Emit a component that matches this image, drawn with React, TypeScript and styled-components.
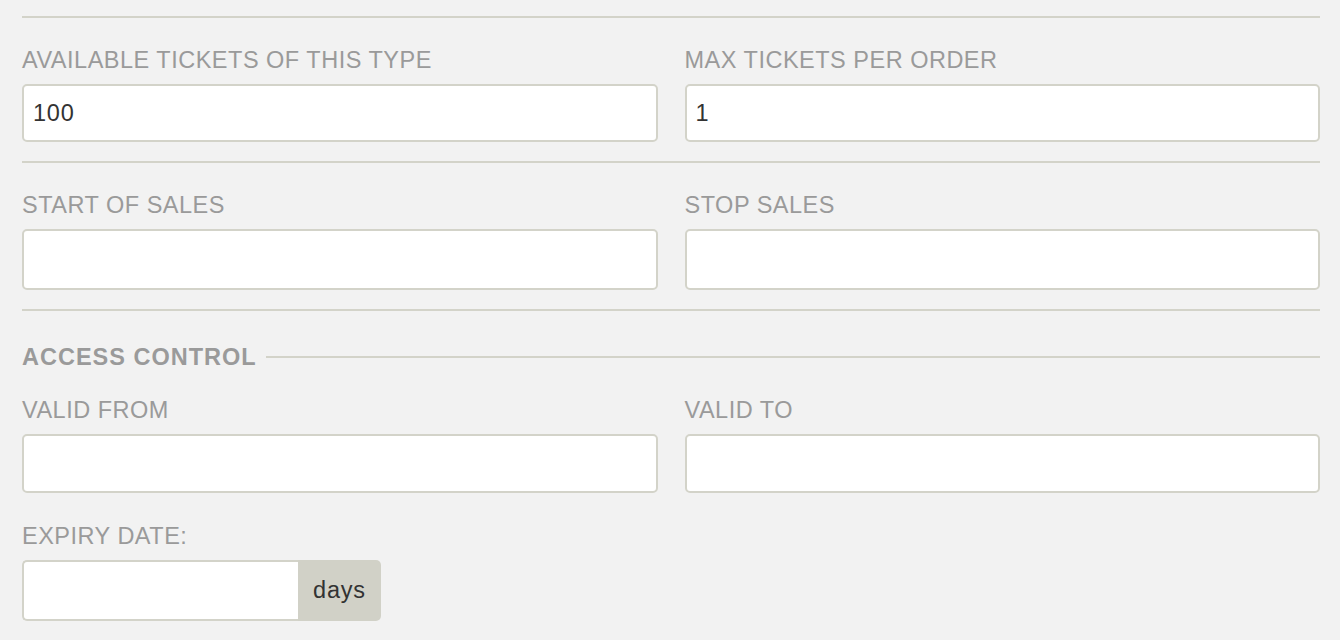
import React from "react";
import styled, { createGlobalStyle } from "styled-components";

const GlobalStyle = createGlobalStyle`
  html, body {
    margin: 0;
    padding: 0;
    background: #f2f2f2;
    font-family: "Liberation Sans", Arial, Helvetica, sans-serif;
  }
`;

const Page = styled.div`
  padding: 16px 20px 0 22px;
  width: 1340px;
  box-sizing: border-box;
`;

const Divider = styled.hr<{ top?: number }>`
  border: none;
  height: 2px;
  margin: ${({ top }) => top ?? 0}px 0 0 0;
  background: #d3d3c9;
`;

const Row = styled.div<{ top: number }>`
  display: grid;
  grid-template-columns: 1fr 1fr;
  column-gap: 27px;
  margin-top: ${({ top }) => top}px;
`;

const Field = styled.div<{ top?: number }>`
  display: flex;
  flex-direction: column;
  margin-top: ${({ top }) => top ?? 0}px;
`;

const Label = styled.label`
  font-size: 23.5px;
  letter-spacing: 0.5px;
  line-height: 26px;
  color: #9a9a9a;
  text-transform: uppercase;
  margin-bottom: 11px;
`;

const TextInput = styled.input<{ h: number }>`
  box-sizing: border-box;
  width: 100%;
  height: ${({ h }) => h}px;
  border: 2px solid #d3d3c9;
  border-radius: 5px;
  background: #ffffff;
  padding: 0 9px;
  font-family: inherit;
  font-size: 23.5px;
  letter-spacing: 0.8px;
  color: #333333;
  outline: none;
`;

const SectionHeader = styled.div`
  display: flex;
  align-items: center;
  gap: 9px;
  margin-top: 33px;
  font-size: 23.5px;
  letter-spacing: 1px;
  line-height: 26px;
  font-weight: bold;
  color: #9a9a9a;
  text-transform: uppercase;

  &::after {
    content: "";
    flex: 1;
    height: 2px;
    background: #d3d3c9;
  }
`;

const InputGroup = styled.div`
  display: flex;
  width: 359px;
  height: 61px;
`;

const GroupInput = styled.input`
  box-sizing: border-box;
  flex: 1;
  min-width: 0;
  height: 100%;
  border: 2px solid #d3d3c9;
  border-right: none;
  border-radius: 5px 0 0 5px;
  background: #ffffff;
  padding: 0 9px;
  font-family: inherit;
  font-size: 23.5px;
  color: #333333;
  outline: none;
`;

const Addon = styled.span`
  display: flex;
  align-items: center;
  justify-content: center;
  width: 83px;
  background: #d1d1c7;
  border-radius: 0 5px 5px 0;
  font-size: 23.5px;
  letter-spacing: 0.8px;
  color: #333333;
`;

export default function App() {
  return (
    <>
      <GlobalStyle />
      <Page>
        <Divider />
        <Row top={29}>
          <Field>
            <Label>Available tickets of this type</Label>
            <TextInput h={58} defaultValue="100" />
          </Field>
          <Field>
            <Label>Max tickets per order</Label>
            <TextInput h={58} defaultValue="1" />
          </Field>
        </Row>
        <Divider top={19} />
        <Row top={29}>
          <Field>
            <Label>Start of sales</Label>
            <TextInput h={61} />
          </Field>
          <Field>
            <Label>Stop sales</Label>
            <TextInput h={61} />
          </Field>
        </Row>
        <Divider top={19} />
        <SectionHeader>Access control</SectionHeader>
        <Row top={27}>
          <Field>
            <Label>Valid from</Label>
            <TextInput h={59} />
          </Field>
          <Field>
            <Label>Valid to</Label>
            <TextInput h={59} />
          </Field>
        </Row>
        <Field top={30}>
          <Label>Expiry date:</Label>
          <InputGroup>
            <GroupInput />
            <Addon>days</Addon>
          </InputGroup>
        </Field>
      </Page>
    </>
  );
}
